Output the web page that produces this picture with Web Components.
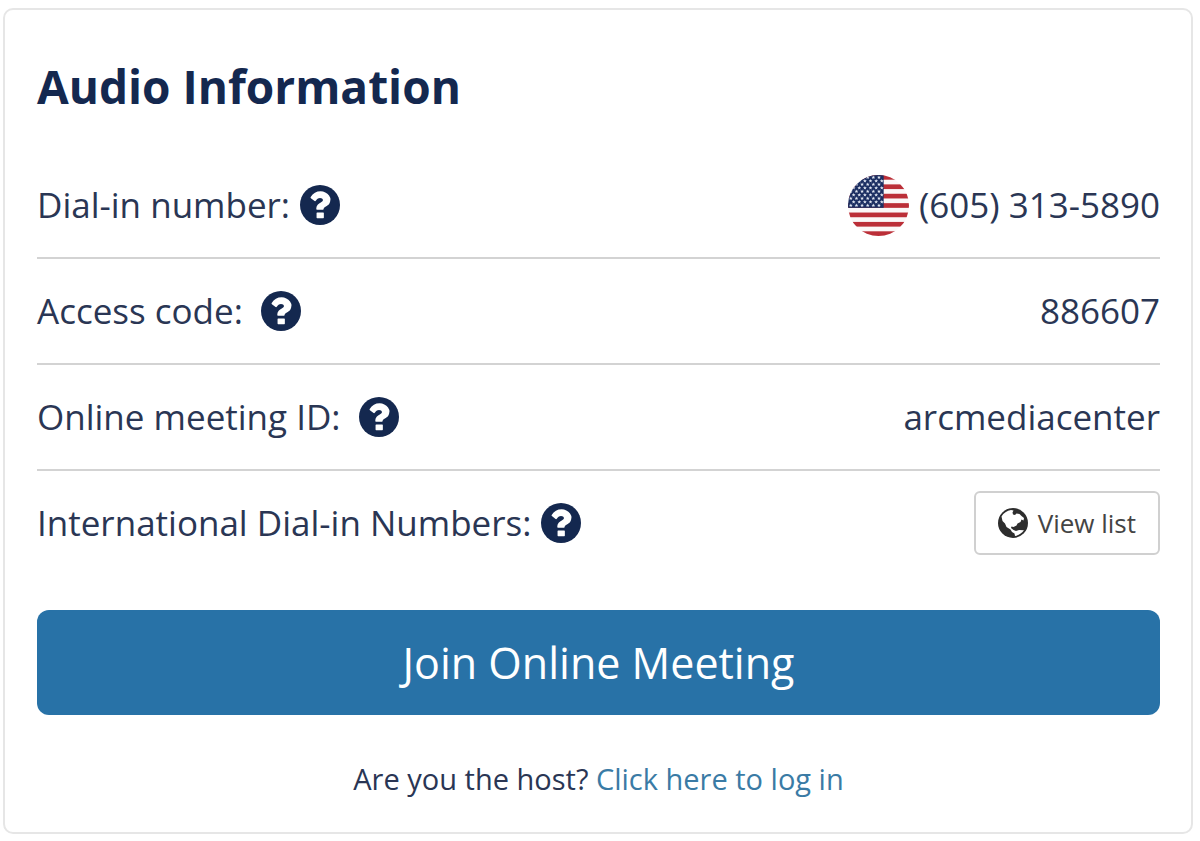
<!DOCTYPE html>
<html lang="en">
<head>
<meta charset="utf-8">
<meta name="viewport" content="width=device-width, initial-scale=1">
<title>Audio Information</title>
<style>
  body {
    margin: 8px 7px 7px 3px;
    background: #fff;
    color: #2a3654;
    font-family: "Open Sans", "Noto Sans", sans-serif;
    font-size: 35px;
    line-height: 48px;
  }
</style>
</head>
<body>
<meeting-card heading="Audio Information">
  <info-row label="Dial-in number:">
    <us-flag></us-flag>
    <span>(605) 313-5890</span>
  </info-row>
  <info-row label="Access code:" spaced>886607</info-row>
  <info-row label="Online meeting ID:" spaced>arcmediacenter</info-row>
  <info-row label="International Dial-in Numbers:">
    <list-button>View list</list-button>
  </info-row>
  <join-button slot="action">Join Online Meeting</join-button>
  <host-login slot="footer" href="#login" link="Click here to log in">Are you the host?</host-login>
</meeting-card>

<script>
class MeetingCard extends HTMLElement {
  constructor() {
    super();
    this.attachShadow({mode: "open"});
    this.shadowRoot.innerHTML = `
      <style>
        :host {
          display: block;
          padding: 42px 31px 29px 32px;
          border: 2px solid #e6e6e6;
          border-radius: 10px;
          background: #fff;
        }
        h2 {
          margin: 0 0 33px;
          color: #14284f;
          font-size: 46px;
          font-weight: 700;
          line-height: 68px;
        }
      </style>
      <h2>${this.getAttribute("heading")}</h2>
      <slot></slot>
      <slot name="action"></slot>
      <slot name="footer"></slot>
    `;
  }
}

class InfoRow extends HTMLElement {
  constructor() {
    super();
    this.attachShadow({mode: "open"});
    const label = this.getAttribute("label");
    this.shadowRoot.innerHTML = `
      <style>
        :host {
          display: flex;
          align-items: center;
          justify-content: space-between;
          min-height: 104px;
          border-bottom: 2px solid #d3d3d3;
        }
        :host(:last-of-type) {
          border-bottom: 0;
        }
        .label, .value {
          display: flex;
          align-items: center;
          gap: 10px;
        }
        :host([spaced]) .label {
          gap: 18px;
        }
      </style>
      <div class="label"><span>${label}</span><help-icon for="${label}"></help-icon></div>
      <div class="value"><slot></slot></div>
    `;
  }
}

class HelpIcon extends HTMLElement {
  constructor() {
    super();
    this.attachShadow({mode: "open"});
  }

  connectedCallback() {
    this.shadowRoot.innerHTML = `
      <style>
        :host {
          display: block;
        }
        button {
          display: block;
          padding: 0;
          border: 0;
          background: none;
          color: #14284f;
          cursor: pointer;
        }
        svg {
          display: block;
          width: 40px;
          height: 40px;
        }
      </style>
      <button type="button" aria-label="Help: ${this.getAttribute("for")}">
        <svg viewBox="128 128 1536 1536" fill="currentColor" aria-hidden="true">
          <circle cx="896" cy="896" r="768"/>
          <path fill="#fff" d="M1044 1376v-172q0-24-24-24h-232q-24 0-24 24v172q0 24 24 24h232q24 0 24-24zm256-672q0-92-57-170t-143-122-178-44q-250 0-384 220-16 24 8 44l142 110q8 6 20 6 16 0 26-12 52-68 84-90 32-22 78-22 44 0 78 24t34 52q0 34-18 54t-64 42q-66 30-119 90t-53 134v30q0 24 24 24h232q24 0 24-24 0-16 20-44t52-46q34-20 51-30t48-36 46-50 29-63 13-87z"/>
        </svg>
      </button>
    `;
  }
}

class UsFlag extends HTMLElement {
  constructor() {
    super();
    this.attachShadow({mode: "open"});

    // 13 stripes, 10 units each
    const stripes = [0, 20, 40, 60, 80, 100, 120].map((y) => {
      return `<rect y="${y}" width="130" height="10" fill="#bb2f38"/>`;
    }).join('');

    let stars = '';
    for (let row = 0; row < 9; row++) {
      for (let x = row % 2 ? 12 : 6; x < 76; x += 12) {
        stars += `<use href="#star" x="${x}" y="${5 + row * 7.5}"/>`;
      }
    }

    this.shadowRoot.innerHTML = `
      <style>
        :host {
          display: block;
        }
        svg {
          display: block;
          width: 61px;
          height: 61px;
        }
      </style>
      <svg viewBox="0 0 130 130" role="img" aria-label="United States">
        <defs>
          <clipPath id="round"><circle cx="65" cy="65" r="65"/></clipPath>
          <path id="star" fill="#dfe5f0" d="M0-4.200 1.100-1.400 4-1.300 1.800.6 2.600 3.400 0 1.800-2.600 3.400-1.800.6-4-1.300-1.100-1.400z"/>
        </defs>
        <g clip-path="url(#round)">
          <rect width="130" height="130" fill="#fbf8f8"/>
          ${stripes}
          <rect width="76" height="70" fill="#1c2f62"/>
          ${stars}
        </g>
      </svg>
    `;
  }
}

class ListButton extends HTMLElement {
  constructor() {
    super();
    this.attachShadow({mode: "open"});
    this.shadowRoot.innerHTML = `
      <style>
        :host {
          display: block;
        }
        button {
          display: flex;
          align-items: center;
          gap: 10px;
          padding: 12px 22px;
          border: 2px solid #d0d0d0;
          border-radius: 6px;
          background: #fff;
          color: #444;
          font-family: inherit;
          font-size: 26px;
          line-height: 36px;
          cursor: pointer;
        }
        svg {
          display: block;
          width: 30px;
          height: 30px;
        }
      </style>
      <button type="button">
        <svg viewBox="0 0 30 30" aria-hidden="true">
          <circle cx="15" cy="15" r="15" fill="#2d2d2d"/>
          <path fill="#fff" d="M3.500 8.500C5.500 5 9 2.500 13 2L15.500 2.500 14.500 4.500 15 6.500 17 7 18.500 5.500 21.500 6 23.500 8 26 10 25.500 12.500 23.500 11.500 22.500 14 19.500 15.500 18.500 17.500 15.500 19 13.500 18.500 13 20 15.500 22 18 23 21 22 26 22.300C23.500 25.500 20.500 27.500 17 28L16.500 25.500 14 24 12.500 21.500 8.500 19 7 15.500 4.500 13z"/>
        </svg>
        <span><slot></slot></span>
      </button>
    `;
  }
}

class JoinButton extends HTMLElement {
  constructor() {
    super();
    this.attachShadow({mode: "open"});
    this.shadowRoot.innerHTML = `
      <style>
        :host {
          display: block;
          margin-top: 35px;
        }
        button {
          display: block;
          width: 100%;
          padding: 22px;
          border: 0;
          border-radius: 12px;
          background: #2872a7;
          color: #fff;
          font-family: inherit;
          font-size: 43px;
          line-height: 61px;
          cursor: pointer;
        }
      </style>
      <button type="button"><slot></slot></button>
    `;
  }
}

class HostLogin extends HTMLElement {
  constructor() {
    super();
    this.attachShadow({mode: "open"});
    this.shadowRoot.innerHTML = `
      <style>
        :host {
          display: block;
          margin-top: 40px;
          font-size: 29px;
          text-align: center;
        }
        a {
          color: #3a7ba5;
          text-decoration: none;
        }
      </style>
      <slot></slot>
      <a href="${this.getAttribute("href")}">${this.getAttribute("link")}</a>
    `;
  }
}

window.customElements.define("meeting-card", MeetingCard);
window.customElements.define("info-row", InfoRow);
window.customElements.define("help-icon", HelpIcon);
window.customElements.define("us-flag", UsFlag);
window.customElements.define("list-button", ListButton);
window.customElements.define("join-button", JoinButton);
window.customElements.define("host-login", HostLogin);
</script>
</body>
</html>
